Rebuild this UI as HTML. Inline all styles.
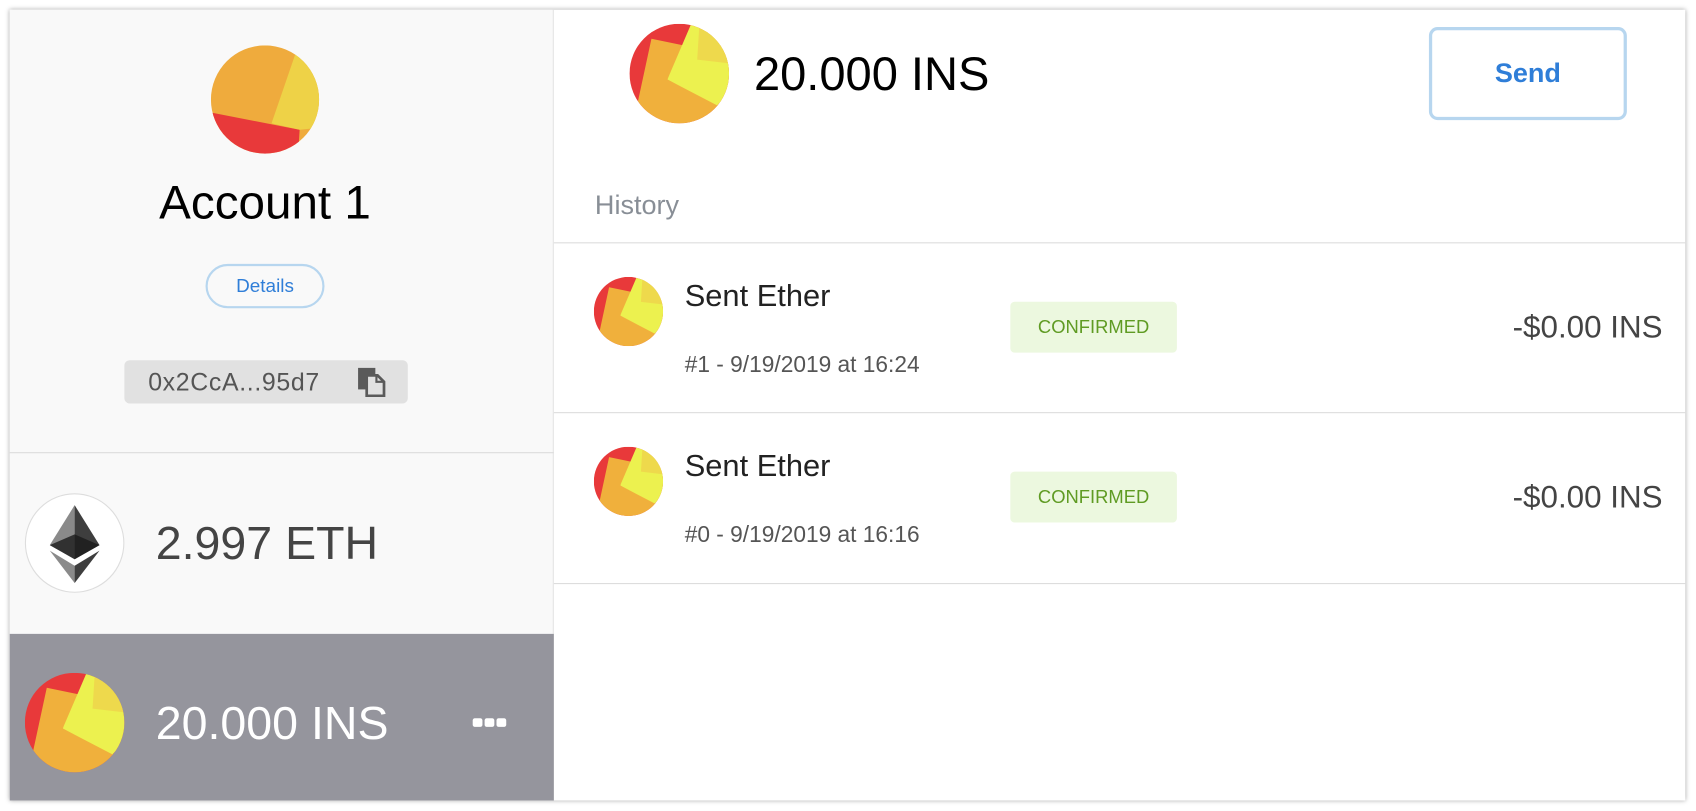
<!DOCTYPE html>
<html><head><meta charset="utf-8"><style>
*{margin:0;padding:0;box-sizing:border-box}
html,body{width:1696px;height:810px;overflow:hidden;background:#fff;font-family:"Liberation Sans",sans-serif}
#w{position:absolute;left:0;top:0;width:1568px;height:750px;transform:scale(1.0817);transform-origin:0 0}
.frame{position:absolute;left:9px;top:9px;width:1549px;height:731px;box-shadow:0 0 4px rgba(0,0,0,.35);background:#fff}
.left{position:absolute;left:9px;top:9px;width:503px;height:731px;background:#f9f9f9;border-right:1px solid #e4e4e4}
.a{position:absolute;white-space:nowrap}
svg{position:absolute}
.hr{position:absolute;height:1px;background:#dcdcdc}
</style></head><body><div id="w">
<div class="frame"></div>
<div class="left"></div>

<svg style="left:195px;top:42px" width="100" height="100" viewBox="0 0 100 100"><defs><clipPath id="c0"><circle cx="50" cy="50" r="50"/></clipPath></defs><g clip-path="url(#c0)"><rect width="100" height="100" fill="#efab3d"/><polygon points="0,62 82,78 80,110 0,110" fill="#e8393a"/><polygon points="78,8 110,20 110,75 82,78 56,72" fill="#eed247"/><polygon points="0,0 5,0 2,30 0,40" fill="#2a45d8"/></g></svg>
<div class="a" style="left:0;width:490px;text-align:center;top:163px;font-size:44px;color:#000">Account 1</div>
<div class="a" style="left:190px;top:244px;width:110px;height:41px;border:2px solid #b7d6ef;border-radius:21px;text-align:center;line-height:37px;font-size:17.5px;color:#2f7ed8">Details</div>
<div class="a" style="left:115px;top:333px;width:262px;height:40px;background:#e1e1e1;border-radius:5px;font-size:23px;letter-spacing:0.6px;color:#555;line-height:40px;padding-left:22px">0x2CcA...95d7</div>
<svg style="left:331px;top:340px" width="26" height="27" viewBox="0 0 26 27"><rect x="0" y="0" width="16" height="20" fill="#5a5a5a"/><path d="M8 7h10l6 6v13H8z" fill="#e1e1e1" stroke="#5a5a5a" stroke-width="2.5"/><path d="M17 7v6h7" fill="none" stroke="#5a5a5a" stroke-width="2"/></svg>
<div class="hr" style="left:9px;top:418px;width:503px"></div>

<div class="a" style="left:23px;top:456px;width:92px;height:92px;border-radius:50%;background:#fff;border:1.5px solid #ddd"></div>
<svg style="left:46px;top:467px" width="46" height="72" viewBox="0 0 46 72"><polygon points="23,0 0,37 23,50" fill="#8a8a8a"/><polygon points="23,0 46,37 23,50" fill="#3e3e3e"/><polygon points="0,37 23,27 46,37 23,50" fill="#1a1a1a" opacity=".8"/><polygon points="0,42 23,56 23,72" fill="#8a8a8a"/><polygon points="46,42 23,56 23,72" fill="#3e3e3e"/></svg>
<div class="a" style="left:144px;top:479px;font-size:43px;color:#444">2.997 ETH</div>

<div class="a" style="left:9px;top:586px;width:503px;height:154px;background:#95959d"></div>
<svg style="left:23px;top:622px" width="92" height="92" viewBox="0 0 100 100"><defs><clipPath id="c1"><circle cx="50" cy="50" r="50"/></clipPath><g id="ins"><rect width="100" height="100" fill="#e8393a"/><polygon points="22,15 56,22 38,56 90,82 60,110 0,110 8,80" fill="#f0b03c"/><polygon points="62,0 38,56 88,82 110,60 110,0" fill="#ecf14f"/><polygon points="70,4 68,36 102,40 102,0" fill="#eed94c"/></g></defs><g clip-path="url(#c1)"><use href="#ins"/></g></svg>
<div class="a" style="left:144px;top:645px;font-size:43px;color:#fff">20.000 INS</div>
<div class="a" style="left:437px;top:664px;width:9px;height:8px;background:#fff;border-radius:2px"></div>
<div class="a" style="left:448px;top:664px;width:9px;height:8px;background:#fff;border-radius:2px"></div>
<div class="a" style="left:459px;top:664px;width:9px;height:8px;background:#fff;border-radius:2px"></div>

<svg style="left:582px;top:22px" width="92" height="92" viewBox="0 0 100 100"><g clip-path="url(#c1)"><use href="#ins"/></g></svg>
<div class="a" style="left:697px;top:45px;font-size:43.5px;color:#000">20.000 INS</div>
<div class="a" style="left:1321px;top:25px;width:183px;height:86px;border:3px solid #b7d6ef;border-radius:8px;text-align:center;line-height:80px;font-size:25px;font-weight:bold;color:#2f7ed8">Send</div>

<div class="a" style="left:550px;top:176px;font-size:25px;color:#888e96">History</div>
<div class="hr" style="left:512px;top:224px;width:1046px"></div>

<svg style="left:549px;top:256px" width="64" height="64" viewBox="0 0 100 100"><g clip-path="url(#c1)"><use href="#ins"/></g></svg>
<div class="a" style="left:633px;top:258px;font-size:28.5px;color:#222">Sent Ether</div>
<div class="a" style="left:633px;top:326px;font-size:21px;color:#555">#1 - 9/19/2019 at 16:24</div>
<div class="a" style="left:934px;top:279px;width:154px;height:47px;background:#ecf8df;border-radius:4px;text-align:center;line-height:47px;font-size:17px;color:#5f9b23">CONFIRMED</div>
<div class="a" style="right:31px;top:287px;font-size:29px;color:#444">-$0.00 INS</div>
<div class="hr" style="left:512px;top:381px;width:1046px"></div>

<svg style="left:549px;top:413px" width="64" height="64" viewBox="0 0 100 100"><g clip-path="url(#c1)"><use href="#ins"/></g></svg>
<div class="a" style="left:633px;top:415px;font-size:28.5px;color:#222">Sent Ether</div>
<div class="a" style="left:633px;top:483px;font-size:21px;color:#555">#0 - 9/19/2019 at 16:16</div>
<div class="a" style="left:934px;top:436px;width:154px;height:47px;background:#ecf8df;border-radius:4px;text-align:center;line-height:47px;font-size:17px;color:#5f9b23">CONFIRMED</div>
<div class="a" style="right:31px;top:444px;font-size:29px;color:#444">-$0.00 INS</div>
<div class="hr" style="left:512px;top:539px;width:1046px"></div>
</div></body></html>
